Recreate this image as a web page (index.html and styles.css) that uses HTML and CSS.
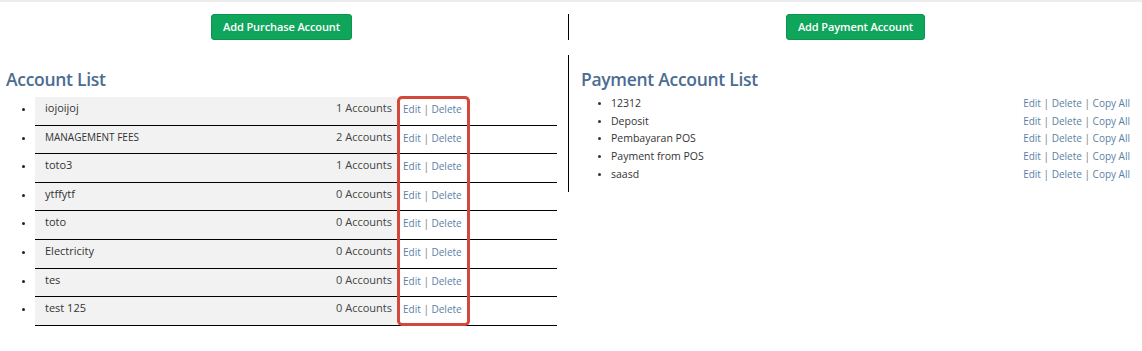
FILE: index.html
```html
<!DOCTYPE html>
<html>
<head>
<meta charset="utf-8">
<link rel="stylesheet" href="styles.css">
</head>
<body>
<div class="rule"></div>
<div class="grid">
  <div class="cell left top"><button class="btn">Add Purchase Account</button></div>
  <div class="cell right top"><button class="btn">Add Payment Account</button></div>
  <div class="cell left bottom">
    <h2 class="title">Account List</h2>
    <ul class="acc-list">
      <li><div class="row"><span class="name">iojoijoj</span><span class="count">1 Accounts</span><span class="actions"><a>Edit</a> <span class="sep">|</span> <a>Delete</a></span></div></li>
      <li><div class="row"><span class="name caps">MANAGEMENT FEES</span><span class="count">2 Accounts</span><span class="actions"><a>Edit</a> <span class="sep">|</span> <a>Delete</a></span></div></li>
      <li><div class="row"><span class="name">toto3</span><span class="count">1 Accounts</span><span class="actions"><a>Edit</a> <span class="sep">|</span> <a>Delete</a></span></div></li>
      <li><div class="row"><span class="name">ytffytf</span><span class="count">0 Accounts</span><span class="actions"><a>Edit</a> <span class="sep">|</span> <a>Delete</a></span></div></li>
      <li><div class="row"><span class="name">toto</span><span class="count">0 Accounts</span><span class="actions"><a>Edit</a> <span class="sep">|</span> <a>Delete</a></span></div></li>
      <li><div class="row"><span class="name">Electricity</span><span class="count">0 Accounts</span><span class="actions"><a>Edit</a> <span class="sep">|</span> <a>Delete</a></span></div></li>
      <li><div class="row"><span class="name">tes</span><span class="count">0 Accounts</span><span class="actions"><a>Edit</a> <span class="sep">|</span> <a>Delete</a></span></div></li>
      <li><div class="row"><span class="name">test 125</span><span class="count">0 Accounts</span><span class="actions"><a>Edit</a> <span class="sep">|</span> <a>Delete</a></span></div></li>
    </ul>
    <div class="highlight"></div>
  </div>
  <div class="cell right bottom">
    <h2 class="title">Payment Account List</h2>
    <ul class="pay-list">
      <li><div class="prow"><span>12312</span><span class="pactions"><a>Edit</a> <span class="sep">|</span> <a>Delete</a> <span class="sep">|</span> <a>Copy All</a></span></div></li>
      <li><div class="prow"><span>Deposit</span><span class="pactions"><a>Edit</a> <span class="sep">|</span> <a>Delete</a> <span class="sep">|</span> <a>Copy All</a></span></div></li>
      <li><div class="prow"><span>Pembayaran POS</span><span class="pactions"><a>Edit</a> <span class="sep">|</span> <a>Delete</a> <span class="sep">|</span> <a>Copy All</a></span></div></li>
      <li><div class="prow"><span>Payment from POS</span><span class="pactions"><a>Edit</a> <span class="sep">|</span> <a>Delete</a> <span class="sep">|</span> <a>Copy All</a></span></div></li>
      <li><div class="prow"><span>saasd</span><span class="pactions"><a>Edit</a> <span class="sep">|</span> <a>Delete</a> <span class="sep">|</span> <a>Copy All</a></span></div></li>
    </ul>
  </div>
</div>
</body>
</html>
```
FILE: styles.css
```css
* { box-sizing: border-box; }
body {
  margin: 0;
  background: #fff;
  font-family: "Open Sans", "Liberation Sans", sans-serif;
  color: #333;
}
.rule {
  height: 2px;
  background: #ececec;
}
.grid {
  display: grid;
  grid-template-columns: 568px 1fr;
  grid-template-rows: 26px auto;
  row-gap: 15px;
  margin-top: 12px;
  align-items: start;
}
.cell.left { padding: 0 11px 0 6px; }
.cell.right { border-left: 1px solid #000; padding: 0 12px 0 12px; }
.cell.top { display: flex; justify-content: center; align-items: center; height: 26px; }
.cell.bottom { position: relative; }
.cell.right.bottom { padding-bottom: 8px; }
.btn {
  height: 26px;
  padding: 0 11px 2px;
  background: #0fa55a;
  border: 1px solid #0c9550;
  border-radius: 3px;
  color: #fff;
  font-family: inherit;
  font-size: 11px;
  font-weight: 600;
  letter-spacing: -0.1px;
}
.title {
  margin: 12px 0 0 0;
  font-size: 17.5px;
  line-height: 24px;
  font-weight: 600;
  color: #4c6c91;
  letter-spacing: -0.3px;
}
.acc-list {
  margin: 6px 0 0 0;
  padding-left: 29px;
  font-size: 11px;
}
.acc-list li { color: #222; }
.acc-list li::marker { font-size: 9px; }
.row {
  display: flex;
  height: 28.6px;
  border-bottom: 1px solid #000;
  line-height: 22px;
}
.name {
  flex: 1;
  background: #f2f2f2;
  padding-left: 10px;
  color: #333;
}
.caps { font-size: 10px; }
.count {
  background: #f2f2f2;
  padding-right: 5px;
  color: #444;
}
.actions {
  width: 160px;
  padding-left: 6px;
  padding-top: 1px;
  font-size: 10px;
  white-space: nowrap;
}
a { color: #5a7fa6; }
.sep { color: #777; }
.highlight {
  position: absolute;
  left: 397px;
  top: 41px;
  width: 73px;
  height: 230px;
  border: 3px solid #d4473b;
  border-radius: 5px;
}
.pay-list {
  margin: 4px 0 0 0;
  padding-left: 30px;
  font-size: 10.5px;
}
.pay-list li::marker { font-size: 8px; }
.prow {
  display: flex;
  justify-content: space-between;
  line-height: 17.7px;
}
.pactions { font-size: 10px; }
```
